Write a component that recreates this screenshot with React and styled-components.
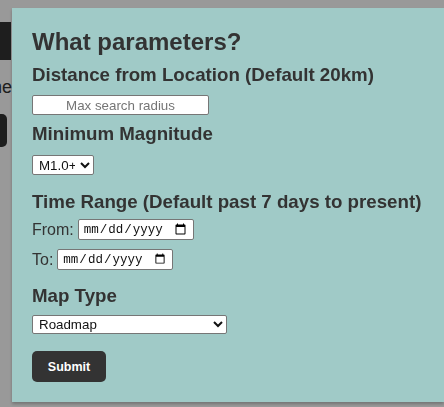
import React from 'react';
import styled, { createGlobalStyle } from 'styled-components';

const GlobalStyle = createGlobalStyle`
    html, body {
        margin: 0;
        background: #fff;
        font-family: "Liberation Sans", Arial, sans-serif;
        color: #333;
    }
`;

const Page = styled.div`
    width: 12px;
    height: 407px;
    overflow: hidden;
    display: flex;
    flex-direction: column;
    align-items: flex-end;
`;

const PageBar = styled.div`
    align-self: flex-start;
    margin-top: 22px;
    width: 11px;
    height: 38px;
    background: #333;
`;

const PageText = styled.div`
    margin-top: 17px;
    font-size: 18px;
    white-space: nowrap;
    color: #333;
`;

const PageButton = styled.div`
    align-self: flex-start;
    margin-top: 16px;
    width: 7px;
    height: 33px;
    background: #333;
    border-radius: 0 5px 5px 0;
`;

const Overlay = styled.div`
    position: fixed;
    inset: 0;
    background: rgba(0, 0, 0, 0.4);
`;

const Modal = styled.form`
    position: absolute;
    top: 8px;
    left: 12px;
    right: 0;
    padding: 20px;
    background: #a0cac7;
    box-shadow: 0 2px 3px rgba(0, 0, 0, 0.25);
    display: flex;
    flex-direction: column;
    align-items: flex-start;
`;

const Title = styled.h2`
    margin: 0;
    font-size: 24px;
    font-weight: bold;
    line-height: normal;
    color: #333;
`;

const Heading = styled.h3`
    margin: ${p => p.$top}px 0 0;
    font-size: 18.72px;
    font-weight: bold;
    line-height: normal;
    color: #333;
`;

const TextInput = styled.input`
    box-sizing: border-box;
    margin-top: 9px;
    width: 177px;
    height: 20px;
    padding: 0 4px;
    border: 1px solid #767676;
    border-radius: 2px;
    font-family: "Liberation Sans", Arial, sans-serif;
    font-size: 13.33px;
    text-align: center;
    background: #fff;
    &::placeholder {
        color: #757575;
    }
`;

const Select = styled.select`
    box-sizing: border-box;
    margin-top: ${p => p.$top}px;
    width: ${p => p.$width}px;
    height: ${p => p.$height}px;
    padding: 0 2px;
    border: 1px solid #767676;
    border-radius: 2px;
    background: #fff;
    color: #111;
    font-family: "Liberation Sans", Arial, sans-serif;
    font-size: 13.33px;
`;

const DateRow = styled.label`
    display: flex;
    align-items: center;
    gap: 4px;
    margin-top: ${p => p.$top}px;
    font-size: 16px;
    line-height: 21px;
    color: #333;
`;

const DateInput = styled.input`
    box-sizing: border-box;
    width: 116px;
    height: 21px;
    padding: 0 4px;
    border: 1px solid #767676;
    border-radius: 2px;
    background: #fff;
    color: #111;
    font-family: "Liberation Mono", monospace;
    font-size: 12.5px;
`;

const SubmitButton = styled.button`
    margin-top: 17px;
    width: 74px;
    height: 31px;
    border: none;
    border-radius: 5px;
    background: #333;
    color: #fff;
    font-family: "Liberation Sans", Arial, sans-serif;
    font-size: 12.5px;
    font-weight: bold;
`;

export default function App() {
    return (
        <>
            <GlobalStyle />
            <Page>
                <PageBar />
                <PageText>the</PageText>
                <PageButton />
            </Page>
            <Overlay>
                <Modal onSubmit={e => e.preventDefault()}>
                    <Title>What parameters?</Title>
                    <Heading $top={8}>Distance from Location (Default 20km)</Heading>
                    <TextInput type="text" placeholder="Max search radius" />
                    <Heading $top={8}>Minimum Magnitude</Heading>
                    <Select $top={10} $width={62} $height={20} defaultValue="1">
                        <option value="1">M1.0+</option>
                        <option value="2">M2.5+</option>
                        <option value="4">M4.5+</option>
                    </Select>
                    <Heading $top={16}>Time Range (Default past 7 days to present)</Heading>
                    <DateRow $top={6}>From: <DateInput type="date" /></DateRow>
                    <DateRow $top={9}>To: <DateInput type="date" /></DateRow>
                    <Heading $top={15}>Map Type</Heading>
                    <Select $top={8} $width={195} $height={19} defaultValue="roadmap">
                        <option value="roadmap">Roadmap</option>
                        <option value="satellite">Satellite</option>
                        <option value="hybrid">Hybrid</option>
                        <option value="terrain">Terrain</option>
                    </Select>
                    <SubmitButton type="submit">Submit</SubmitButton>
                </Modal>
            </Overlay>
        </>
    );
}
